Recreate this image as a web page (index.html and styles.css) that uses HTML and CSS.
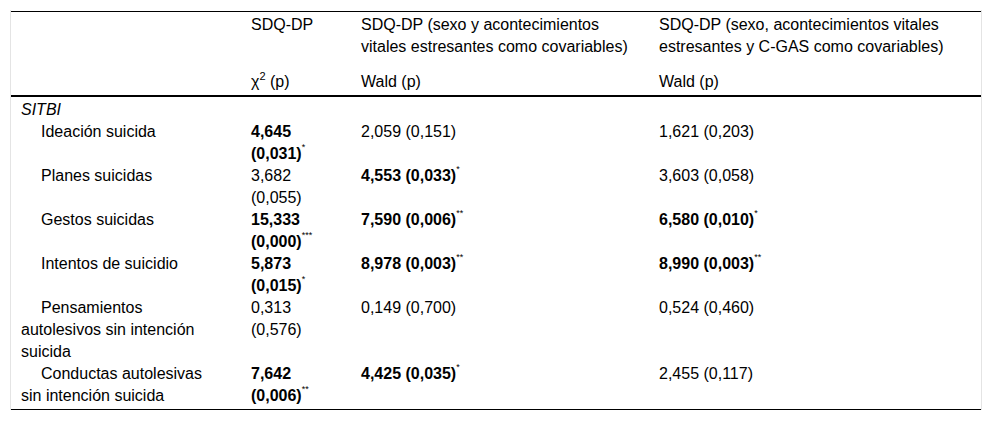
FILE: index.html
```html
<!DOCTYPE html>
<html lang="es">
<head>
<meta charset="utf-8">
<title>Tabla SDQ-DP</title>
<link rel="stylesheet" href="styles.css">
</head>
<body>
<div class="wrap">
<table class="tbl">
<colgroup>
<col class="c1"><col class="c2"><col class="c3"><col class="c4">
</colgroup>
<thead>
<tr class="h1">
<th></th>
<th>SDQ-DP</th>
<th>SDQ-DP (sexo y acontecimientos vitales estresantes como covariables)</th>
<th>SDQ-DP (sexo, acontecimientos vitales estresantes y C-GAS como covariables)</th>
</tr>
<tr class="h2">
<th></th>
<th>χ<sup class="sq">2</sup> (p)</th>
<th>Wald (p)</th>
<th>Wald (p)</th>
</tr>
</thead>
<tbody>
<tr><td class="grp" colspan="4">SITBI</td></tr>
<tr>
<td class="lbl">Ideación suicida</td>
<td><b>4,645 (0,031)</b><sup class="st">*</sup></td>
<td>2,059 (0,151)</td>
<td>1,621 (0,203)</td>
</tr>
<tr>
<td class="lbl">Planes suicidas</td>
<td>3,682 (0,055)</td>
<td><b>4,553 (0,033)</b><sup class="st">*</sup></td>
<td>3,603 (0,058)</td>
</tr>
<tr>
<td class="lbl">Gestos suicidas</td>
<td><b>15,333 (0,000)</b><sup class="st">***</sup></td>
<td><b>7,590 (0,006)</b><sup class="st">**</sup></td>
<td><b>6,580 (0,010)</b><sup class="st">*</sup></td>
</tr>
<tr>
<td class="lbl">Intentos de suicidio</td>
<td><b>5,873 (0,015)</b><sup class="st">*</sup></td>
<td><b>8,978 (0,003)</b><sup class="st">**</sup></td>
<td><b>8,990 (0,003)</b><sup class="st">**</sup></td>
</tr>
<tr>
<td class="lbl">Pensamientos autolesivos sin intención suicida</td>
<td>0,313 (0,576)</td>
<td>0,149 (0,700)</td>
<td>0,524 (0,460)</td>
</tr>
<tr>
<td class="lbl">Conductas autolesivas sin intención suicida</td>
<td><b>7,642 (0,006)</b><sup class="st">**</sup></td>
<td><b>4,425 (0,035)</b><sup class="st">*</sup></td>
<td>2,455 (0,117)</td>
</tr>
</tbody>
</table>
</div>
</body>
</html>
```
FILE: styles.css
```css
html, body {
  margin: 0;
  padding: 0;
  background: #fff;
}
body {
  font-family: "Liberation Sans", Arial, sans-serif;
  font-size: 16px;
  color: #000;
}
.wrap {
  margin: 10px 10px 0 10px;
  padding-top: 1px;
  border-left: 1px solid #e4e4e4;
  border-right: 1px solid #e4e4e4;
}
.tbl {
  width: 970px;
  border-collapse: collapse;
  table-layout: fixed;
  border-top: 1px solid #000;
  border-bottom: 1px solid #000;
}
.c1 { width: 230px; }
.c2 { width: 110px; }
.c3 { width: 298px; }
.c4 { width: 332px; }
.tbl th,
.tbl td {
  text-align: left;
  vertical-align: top;
  font-weight: normal;
  line-height: 22px;
  padding: 0 20px 0 10px;
}
.tbl .h1 th {
  padding-top: 2px;
  padding-bottom: 6px;
}
.tbl .h2 th {
  padding-top: 7px;
  padding-bottom: 2px;
  border-bottom: 2px solid #000;
}
.tbl tbody tr:first-child td {
  padding-top: 2px;
}
.tbl tbody tr:last-child td {
  padding-bottom: 2px;
}
.grp {
  font-style: italic;
}
.lbl {
  text-indent: 20px;
}
b {
  font-weight: bold;
}
.sq {
  font-size: 11px;
  line-height: 0;
  vertical-align: 7px;
}
.st {
  font-size: 9px;
  line-height: 0;
  vertical-align: 9px;
}
```
